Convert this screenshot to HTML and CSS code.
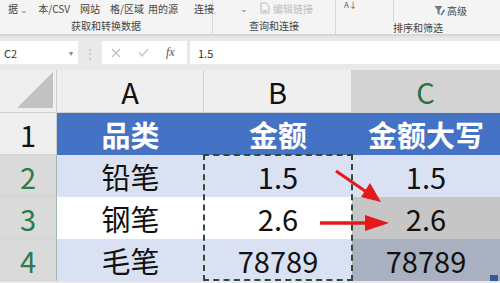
FILE: index.html
```html
<!DOCTYPE html>
<html lang="zh">
<head>
<meta charset="utf-8">
<link rel="stylesheet" href="styles.css">
</head>
<body>
<div class="ribbon">
    <div class="group g1">
        <div class="tools">
            <span>据 <small>⌄</small></span>
            <span>本/CSV</span>
            <span>网站</span>
            <span>格/区域</span>
            <span class="tight">用的源</span>
            <span class="wide">连接</span>
        </div>
        <div class="glabel">获取和转换数据</div>
    </div>
    <div class="group g2">
        <div class="tools">
            <span class="chev">⌄</span>
            <span class="muted">
                <svg width="10" height="12" viewBox="0 0 10 12"><path d="M1 1h5l3 3v7H1z" fill="none" stroke="#bbb"/><path d="M3 9h4" stroke="#bbb" stroke-width="1.5"/></svg>
                编辑链接
            </span>
        </div>
        <div class="glabel">查询和连接</div>
    </div>
    <div class="group g3">
        <div class="tools">
            <span class="sort">A<b>↓</b></span>
            <span class="vsep"></span>
            <span class="adv">
                <svg width="11" height="11" viewBox="0 0 11 11"><path d="M0.5 1h8l-3 4v5l-2-1.5V5z" fill="#777"/><path d="M7 10l3.5-5" stroke="#3b6fb6" stroke-width="1.4"/></svg>
                高级
            </span>
        </div>
        <div class="glabel">排序和筛选</div>
    </div>
</div>
<div class="ribbon-shade"></div>

<div class="formula-bar">
    <div class="name-box">C2<span class="drop">▾</span></div>
    <div class="grip">⋮</div>
    <div class="fx-box">
        <svg width="10" height="10" viewBox="0 0 10 10"><path d="M1 1l8 8M9 1l-8 8" stroke="#bdbdbd" stroke-width="1.2"/></svg>
        <svg width="11" height="9" viewBox="0 0 11 9"><path d="M1 4.5l3 3.5 6-7" fill="none" stroke="#c4c4c4" stroke-width="1.2"/></svg>
        <span class="fx">fx</span>
    </div>
    <div class="input">1.5</div>
</div>

<div class="sheet">
    <div class="grid">
        <div class="corner"><svg width="38" height="38" viewBox="0 0 38 38"><path d="M37 1V37H1z" fill="#c2c2c2"/></svg></div>
        <div class="col-head">A</div>
        <div class="col-head">B</div>
        <div class="col-head sel">C</div>

        <div class="row-head">1</div>
        <div class="cell title">品类</div>
        <div class="cell title">金额</div>
        <div class="cell title">金额大写</div>

        <div class="row-head sel">2</div>
        <div class="cell band">铅笔</div>
        <div class="cell band">1.5</div>
        <div class="cell band">1.5</div>

        <div class="row-head sel">3</div>
        <div class="cell">钢笔</div>
        <div class="cell">2.6</div>
        <div class="cell shade">2.6</div>

        <div class="row-head sel">4</div>
        <div class="cell band">毛笔</div>
        <div class="cell band">78789</div>
        <div class="cell band-shade">78789</div>
    </div>

    <div class="marquee"></div>
    <div class="handle"></div>

    <svg class="arrows" width="500" height="213" viewBox="0 0 500 213">
        <line x1="336" y1="101" x2="368" y2="123" stroke="#e3191c" stroke-width="3"/>
        <polygon points="381,132 361,127 370,113" fill="#e3191c"/>
        <line x1="320" y1="153" x2="368" y2="153" stroke="#e3191c" stroke-width="3.5"/>
        <polygon points="389,153 365,145 365,161" fill="#e3191c"/>
    </svg>
</div>
</body>
</html>
```

FILE: styles.css
```css
body{
    margin: 0;
    width: 500px;
    height: 283px;
    overflow: hidden;
    background-color: #e9e9e9;
    font-family: "Noto Sans CJK SC", sans-serif;
}

/* ribbon */
.ribbon{
    display: flex;
    height: 34px;
    background-color: #f4f4f4;
    border-bottom: 1px solid #d4d4d4;
    font-size: 10px;
    color: #444;
}
.group{
    display: flex;
    flex-direction: column;
    border-right: 1px solid #d8d8d8;
    box-sizing: border-box;
}
.g1{ width: 213px; }
.g2{ width: 123px; }
.g3{ width: 164px; border-right: none; }
.tools{
    display: flex;
    align-items: center;
    gap: 10px;
    height: 18px;
    padding-left: 8px;
    white-space: nowrap;
}
.tools small{
    font-size: 9px;
    color: #777;
}
.tools .tight{ margin-left: -6px; }
.tools .wide{ margin-left: 6px; }
.glabel{
    text-align: center;
    line-height: 16px;
    margin-top: 2px;
}
.g2 .tools{ padding-left: 27px; gap: 12px; }
.chev{ color: #777; font-size: 9px; }
.muted{
    display: flex;
    align-items: center;
    gap: 3px;
    color: #bdbdbd;
}
.sort{
    align-self: flex-start;
    font-size: 8px;
    line-height: 9px;
    color: #555;
    width: 12px;
}
.sort b{ font-weight: normal; }
.vsep{
    align-self: flex-start;
    width: 1px;
    height: 22px;
    background-color: #d8d8d8;
    margin-left: 27px;
}
.adv{
    display: flex;
    align-items: center;
    gap: 2px;
    margin-left: 30px;
    margin-top: 3px;
}
.ribbon-shade{
    height: 3px;
    background: linear-gradient(#d9d9d9, #e9e9e9);
}

/* formula bar */
.formula-bar{
    display: flex;
    align-items: flex-start;
    height: 32px;
    padding-top: 3px;
    box-sizing: border-box;
}
.name-box, .fx-box, .input{
    height: 23px;
    background-color: #fff;
    box-sizing: border-box;
    display: flex;
    align-items: center;
    font-size: 11px;
    color: #333;
}
.name-box{
    width: 78px;
    padding-left: 4px;
    justify-content: space-between;
    padding-right: 5px;
}
.drop{ font-size: 8px; color: #888; }
.grip{
    width: 24px;
    text-align: center;
    color: #bbb;
    font-size: 12px;
    line-height: 23px;
}
.fx-box{
    width: 85px;
    padding-left: 9px;
    gap: 17px;
}
.fx{
    font-family: "Liberation Serif", serif;
    font-style: italic;
    font-size: 12px;
    color: #555;
}
.input{
    flex: 1;
    margin-left: 3px;
    padding-left: 8px;
}

/* sheet */
.sheet{
    position: relative;
    background-color: #fff;
}
.grid{
    display: grid;
    grid-template-columns: 57px 147px 148px 148px;
    grid-template-rows: 43px 42px 42px 42px 42px;
}
.grid div{
    display: flex;
    align-items: center;
    justify-content: center;
    font-size: 29px;
    color: #111;
    box-sizing: border-box;
}
.corner{
    background-color: #efefef;
    border-right: 1px solid #cfcfcf;
    border-bottom: 1px solid #cfcfcf;
}
.grid .corner{ align-items: flex-end; justify-content: flex-end; padding: 0 2px 3px 0; }
.col-head{
    background-color: #efefef;
    border-right: 1px solid #d2d2d2;
    border-bottom: 1px solid #cfcfcf;
}
.grid .col-head.sel{
    background-color: #d3d3d3;
    color: #217346;
}
.row-head{
    background-color: #efefef;
    border-bottom: 1px solid #d2d2d2;
    border-right: 1px solid #cfcfcf;
}
.grid .row-head.sel{
    background-color: #dadada;
    color: #2b7a50;
    border-right: 1px solid #9fb8a8;
}
.grid .title{
    background-color: #4472c4;
    color: #fff;
    font-weight: bold;
}
.band{ background-color: #d9e1f2; }
.shade{ background-color: #c6c6c6; }
.band-shade{ background-color: #a9b0bf; }

.marquee{
    position: absolute;
    left: 203px;
    top: 84px;
    width: 150px;
    height: 127px;
    border: 2px dashed #2f4a3a;
    box-sizing: border-box;
}
.handle{
    position: absolute;
    left: 490px;
    top: 205px;
    width: 8px;
    height: 6px;
    background-color: #2e5c9e;
}
.arrows{
    position: absolute;
    left: 0;
    top: 0;
}
```
